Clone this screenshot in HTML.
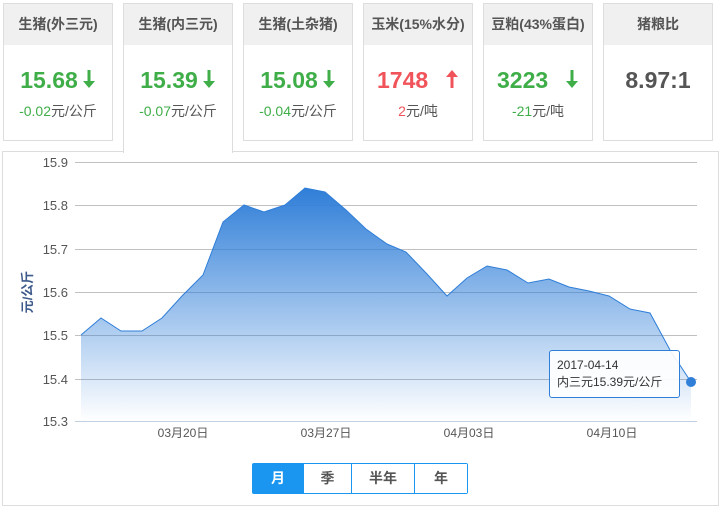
<!DOCTYPE html>
<html><head><meta charset="utf-8"><style>
*{margin:0;padding:0;box-sizing:border-box}
body{width:723px;height:512px;background:#fff;font-family:"Liberation Sans","Microsoft YaHei","Noto Sans CJK SC",sans-serif;position:relative;overflow:hidden}
.card{position:absolute;top:3px;width:110px;height:138px;border:1px solid #ddd;background:#fff;text-align:center}
.card .h{height:41px;background:#f0f0f0;font-size:14px;font-weight:bold;color:#555;line-height:41px}
.card .v{font-size:23px;font-weight:bold;margin-top:22px;line-height:26px}
.card .d{font-size:14px;color:#555;margin-top:8px}
.g{color:#3fae49}.r{color:#f0545a}
.act{height:150px;border-bottom:none;z-index:2}
.panel{position:absolute;left:2px;top:151px;width:717px;height:355px;border:1px solid #ddd}
.btns{position:absolute;left:252px;top:463px;width:216px;height:31px;border:1px solid #1a96f0;border-radius:2px;display:flex;font-size:14px;font-weight:bold;color:#555;z-index:3}
.btns div{text-align:center;line-height:29px;border-left:1px solid #1a96f0;background:#fff}
.tip{position:absolute;left:549px;top:350px;width:131px;height:48px;border:1px solid #2f7ed8;border-radius:3px;background:rgba(255,255,255,.9);font-size:12px;color:#333;padding:6px 0 0 7px;line-height:17px;z-index:3}
.ar{display:inline-block;vertical-align:-1px;margin-left:4px}
</style></head><body>
<div class="card" style="left:3px"><div class="h">生猪(外三元)</div><div class="v g">15.68<svg class="ar" width="14" height="20" viewBox="0 0 14 20"><path d="M5.5 1h3v11h4.5L7 19 1 12h4.5z" fill="#3fae49"/></svg></div><div class="d"><span class="g">-0.02</span>元/公斤</div></div>
<div class="card act" style="left:123px"><div class="h">生猪(内三元)</div><div class="v g">15.39<svg class="ar" width="14" height="20" viewBox="0 0 14 20"><path d="M5.5 1h3v11h4.5L7 19 1 12h4.5z" fill="#3fae49"/></svg></div><div class="d"><span class="g">-0.07</span>元/公斤</div></div>
<div class="card" style="left:243px"><div class="h">生猪(土杂猪)</div><div class="v g">15.08<svg class="ar" width="14" height="20" viewBox="0 0 14 20"><path d="M5.5 1h3v11h4.5L7 19 1 12h4.5z" fill="#3fae49"/></svg></div><div class="d"><span class="g">-0.04</span>元/公斤</div></div>
<div class="card" style="left:363px"><div class="h">玉米(15%水分)</div><div class="v r">1748 &nbsp;<svg class="ar" width="14" height="20" viewBox="0 0 14 20"><path d="M5.5 19h3V8h4.5L7 1 1 8h4.5z" fill="#f0545a"/></svg></div><div class="d"><span class="r">2</span>元/吨</div></div>
<div class="card" style="left:483px"><div class="h">豆粕(43%蛋白)</div><div class="v g">3223 &nbsp;<svg class="ar" width="14" height="20" viewBox="0 0 14 20"><path d="M5.5 1h3v11h4.5L7 19 1 12h4.5z" fill="#3fae49"/></svg></div><div class="d"><span class="g">-21</span>元/吨</div></div>
<div class="card" style="left:603px"><div class="h">猪粮比</div><div class="v" style="color:#555">8.97:1</div></div>
<div class="panel"></div>
<svg style="position:absolute;left:0;top:0" width="723" height="512">
<defs><linearGradient id="gr" x1="0" y1="0" x2="0" y2="1"><stop offset="0" stop-color="#2f7ed8"/><stop offset="1" stop-color="#2f7ed8" stop-opacity="0"/></linearGradient></defs>
<g stroke="#c0c0c0" stroke-width="1">
<line x1="75" y1="162.5" x2="697" y2="162.5"/><line x1="75" y1="205.5" x2="697" y2="205.5"/><line x1="75" y1="249.5" x2="697" y2="249.5"/><line x1="75" y1="292.5" x2="697" y2="292.5"/><line x1="75" y1="335.5" x2="697" y2="335.5"/><line x1="75" y1="379.5" x2="697" y2="379.5"/></g>
<line x1="75" y1="421.5" x2="697" y2="421.5" stroke="#c0d0e0"/>
<path d="M81,335 L101,318 L121,331 L142,331 L162,318 L182,296 L203,275 L223,222 L244,205 L264,212 L285,205 L305,188 L325,192 L346,210 L366,229 L387,244 L406,252 L427,274 L447,296 L467,278 L487,266 L507,270 L528,283 L549,279 L569,287 L589,291 L609,296 L630,309 L650,313 L670,350 L691,382 L691,421 L81,421Z" fill="url(#gr)"/>
<path d="M81,335 L101,318 L121,331 L142,331 L162,318 L182,296 L203,275 L223,222 L244,205 L264,212 L285,205 L305,188 L325,192 L346,210 L366,229 L387,244 L406,252 L427,274 L447,296 L467,278 L487,266 L507,270 L528,283 L549,279 L569,287 L589,291 L609,296 L630,309 L650,313 L670,350 L691,382" fill="none" stroke="#2f7ed8" stroke-width="1"/>
<circle cx="691" cy="382" r="5" fill="#2f7ed8"/>
<g font-size="13" fill="#555" text-anchor="end" font-family="Liberation Sans,sans-serif">
<text x="68" y="167">15.9</text><text x="68" y="210">15.8</text><text x="68" y="254">15.7</text><text x="68" y="297">15.6</text><text x="68" y="340">15.5</text><text x="68" y="384">15.4</text><text x="68" y="426">15.3</text></g>
<g font-size="12" fill="#555" text-anchor="middle">
<text x="183" y="437">03月20日</text><text x="326" y="437">03月27日</text><text x="469" y="437">04月03日</text><text x="612" y="437">04月10日</text></g>
<text transform="translate(32,292) rotate(-90)" font-size="13" font-weight="bold" fill="#3d5a8a" text-anchor="middle">元/公斤</text>
</svg>
<div class="tip">2017-04-14<br>内三元15.39元/公斤</div>
<div class="btns"><div style="width:50px;border:none;background:#1a96f0;color:#fff">月</div><div style="width:48px">季</div><div style="width:63px">半年</div><div style="width:53px">年</div></div>
</body></html>
